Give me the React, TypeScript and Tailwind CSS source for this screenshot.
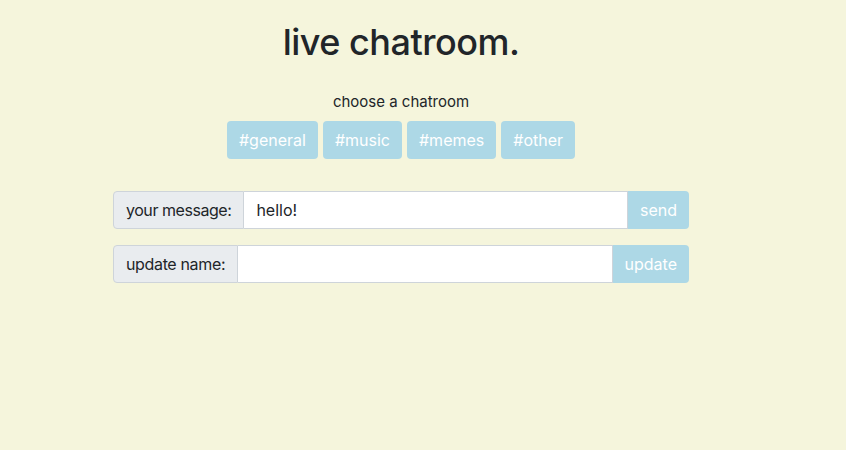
import { useState } from "react"

const ROOMS = ["#general", "#music", "#memes", "#other"]

const App = () => {
  const [message, setMessage] = useState("hello!")
  const [name, setName] = useState("")

  return (
    <div
      className="min-h-[450px] w-full bg-[#f5f5dc] text-[#212529]"
      style={{ fontFamily: "Inter, 'Noto Sans', sans-serif" }}
    >
      <div className="ml-[113px] w-[576px] pt-[18px]">
        <h1 className="text-center text-[36px] font-medium leading-[48px] tracking-[-0.5px]">
          live chatroom.
        </h1>

        {/* room picker */}
        <div className="mt-[24px] flex flex-col items-center">
          <p className="text-[15px] leading-[24px]">choose a chatroom</p>
          <div className="mt-[7px] flex gap-[5px]">
            {ROOMS.map((room) => (
              <button
                key={room}
                className="h-[38px] rounded-[4px] bg-[#add8e6] px-[12px] text-[16px] text-white"
              >
                {room}
              </button>
            ))}
          </div>
        </div>

        {/* message + name forms */}
        <div className="mt-[32px] flex flex-col gap-[16px]">
          <div className="flex h-[38px] text-[16px]">
            <span className="flex items-center rounded-l-[4px] border border-[#ced4da] bg-[#e9ecef] px-[12px] tracking-[-0.45px]">
              your message:
            </span>
            <input
              value={message}
              onChange={(e) => setMessage(e.target.value)}
              className="min-w-0 flex-1 border border-l-0 border-[#ced4da] bg-white px-[12px] outline-none"
            />
            <button className="rounded-r-[4px] bg-[#add8e6] px-[12px] text-white">send</button>
          </div>
          <div className="flex h-[38px] text-[16px]">
            <span className="flex items-center rounded-l-[4px] border border-[#ced4da] bg-[#e9ecef] px-[12px] tracking-[-0.35px]">
              update name:
            </span>
            <input
              value={name}
              onChange={(e) => setName(e.target.value)}
              className="min-w-0 flex-1 border border-l-0 border-[#ced4da] bg-white px-[12px] outline-none"
            />
            <button className="rounded-r-[4px] bg-[#add8e6] px-[12px] text-white">update</button>
          </div>
        </div>
      </div>
    </div>
  )
}

export default App
